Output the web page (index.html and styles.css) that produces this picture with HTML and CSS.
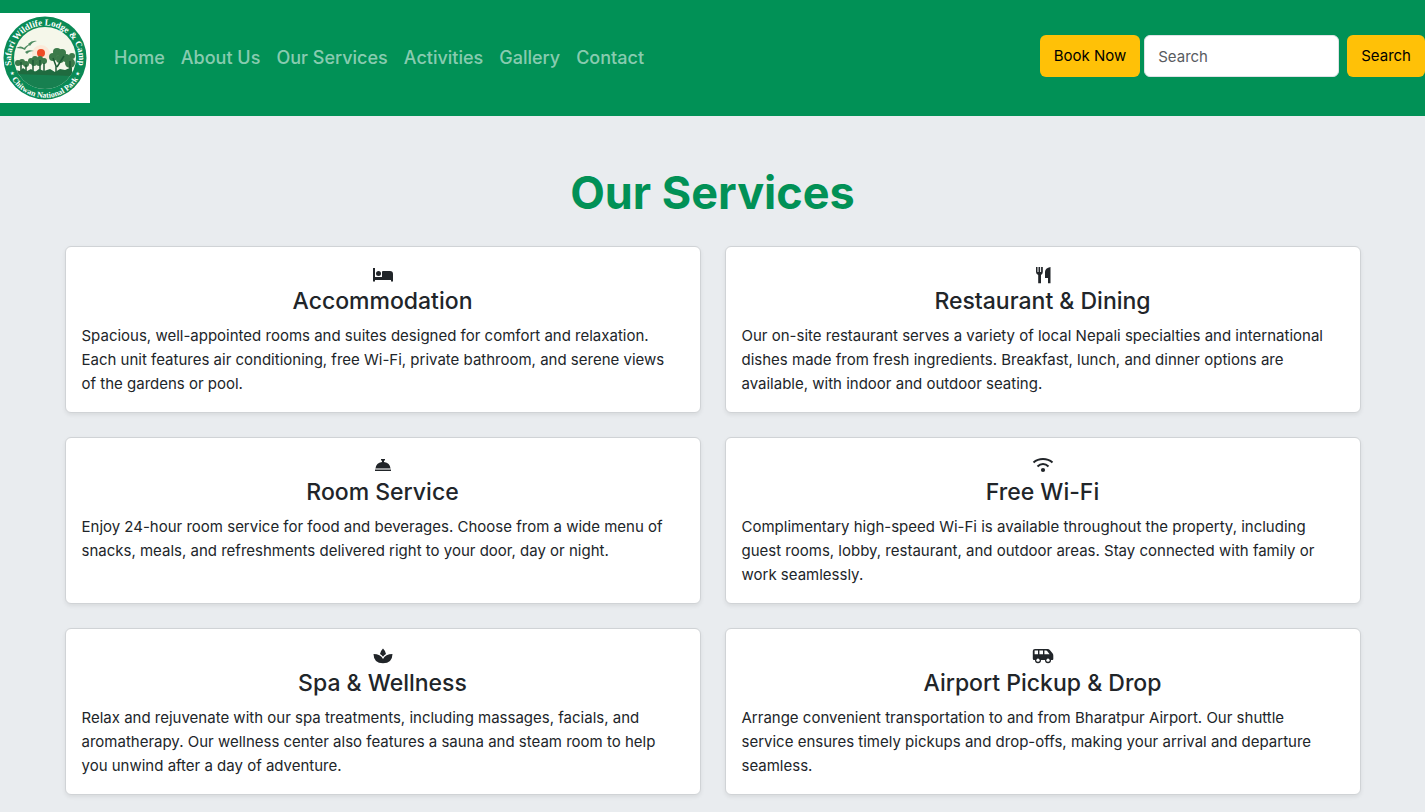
FILE: index.html
```html
<!DOCTYPE html>
<html lang="en">

<head>
  <meta charset="UTF-8">
  <meta name="viewport" content="width=device-width, initial-scale=1">
  <title>Our Services</title>
  <link rel="stylesheet" href="styles.css">
</head>

<body>
  <header class="navbar">
    <a class="logo" href="#" aria-label="Home page">
      <svg viewBox="0 0 90 90" width="90" height="90">
        <defs>
          <path id="ring-top" d="M13 58 A34 34 0 1 1 77 58" />
          <path id="ring-bottom" d="M8 57 A38.500 38.500 0 0 0 82 57" />
          <clipPath id="scene"><circle cx="45" cy="45" r="31" /></clipPath>
        </defs>
        <rect width="90" height="90" fill="#fff" />
        <circle cx="45" cy="45" r="41.500" fill="#0a8a55" />
        <circle cx="45" cy="45" r="31" fill="#f5f7ea" />
        <g clip-path="url(#scene)">
          <circle cx="41" cy="41" r="9" fill="#fbe9d8" />
          <circle cx="41" cy="40" r="4" fill="#ee4a25" />
          <path d="M13 60 Q30 57 45 59 T77 58 V76 H13Z" fill="#178050" />
          <g fill="#3b7a4a">
            <circle cx="18" cy="50" r="3" /><circle cx="22" cy="49" r="3" /><circle cx="26" cy="51" r="3" />
            <circle cx="31" cy="48" r="3" /><circle cx="35" cy="46" r="3" /><circle cx="34" cy="50" r="3" />
            <circle cx="40" cy="46" r="3" /><circle cx="44" cy="48" r="3" /><circle cx="39" cy="50" r="3" />
            <circle cx="53" cy="44" r="4" /><circle cx="57" cy="39" r="4" /><circle cx="62" cy="40" r="4" />
            <circle cx="66" cy="45" r="4" /><circle cx="60" cy="46" r="4" /><circle cx="70" cy="50" r="5" />
            <circle cx="72" cy="43" r="3" />
          </g>
          <path d="M21 49v12M26 52v9M33 47v14M40 47v14M44 50v11M53 45l3 8v8M64 43l-7 11M70 48v13" fill="none" stroke="#1d5a35" stroke-width="1.500" />
          <path d="M15 61v-4l5 1 3-3 4 3 4-2 4 3 4-3 5 2 6-2 5 3 5-3 5 1 7-3v9z" fill="#1f6b3f" />
          <path d="M16 35q5-3 8 0 4-4 7-4-5 3-6 6-3-2-9-2M28 31q4-4 9-3-5 1-7 5M25 39q3-3 9-1-5 0-7 3" fill="#4c8a60" />
        </g>
        <text class="logo-text"><textPath href="#ring-top" startOffset="50%" text-anchor="middle">Safari Wildlife Lodge &amp; Camp</textPath></text>
        <text class="logo-text logo-text-small"><textPath href="#ring-bottom" startOffset="50%" text-anchor="middle">⋆ Chitwan National Park ⋆</textPath></text>
      </svg>
    </a>
    <nav class="nav-links">
      <a href="#">Home</a>
      <a href="#">About Us</a>
      <a href="#">Our Services</a>
      <a href="#">Activities</a>
      <a href="#">Gallery</a>
      <a href="#">Contact</a>
    </nav>
    <form class="search-form">
      <button class="btn" type="button">Book Now</button>
      <input class="search-input" type="search" placeholder="Search" aria-label="Search">
      <button class="btn" type="submit">Search</button>
    </form>
  </header>

  <main class="container">
    <h1>Our Services</h1>
    <div class="services">
      <section class="card">
        <svg class="icon" viewBox="0 0 24 24">
          <path d="M2 5h2v9h7V9q0-1 1-1h7a3 3 0 0 1 3 3v7.500h-2V17H4v1.500H2z" />
          <circle cx="7.500" cy="10.500" r="2.500" />
        </svg>
        <h2>Accommodation</h2>
        <p>Spacious, well-appointed rooms and suites designed for comfort and relaxation. Each unit features air conditioning, free Wi-Fi, private bathroom, and serene views of the gardens or pool.</p>
      </section>
      <section class="card">
        <svg class="icon" viewBox="0 0 24 24">
          <path d="M5 4h1.500v5h1V4h1.600v5h1V4h1.700v5q0 2-1.800 3v8.200H7.200V12Q5 11 5 9zM19.500 4v16.200H17V15h-3V9q0-4 5.500-5z" />
        </svg>
        <h2>Restaurant &amp; Dining</h2>
        <p>Our on-site restaurant serves a variety of local Nepali specialties and international dishes made from fresh ingredients. Breakfast, lunch, and dinner options are available, with indoor and outdoor seating.</p>
      </section>
      <section class="card">
        <svg class="icon" viewBox="0 0 24 24">
          <path d="M10 5h4v1.500h-1V8q6 .7 6.500 6.500h-15Q5 8.700 11 8V6.500h-1zM4 15.500h16V17H4z" />
          <path class="band" d="M4.500 14.500h15v1h-15z" />
        </svg>
        <h2>Room Service</h2>
        <p>Enjoy 24-hour room service for food and beverages. Choose from a wide menu of snacks, meals, and refreshments delivered right to your door, day or night.</p>
      </section>
      <section class="card">
        <svg class="icon" viewBox="0 0 24 24">
          <path class="line" d="M2.500 8.500Q6.500 5 12 5t9.500 3.500M6.500 12.500Q9 10 12 10t5.500 2.500" />
          <circle cx="12" cy="16" r="2.100" />
        </svg>
        <h2>Free Wi-Fi</h2>
        <p>Complimentary high-speed Wi-Fi is available throughout the property, including guest rooms, lobby, restaurant, and outdoor areas. Stay connected with family or work seamlessly.</p>
      </section>
      <section class="card">
        <svg class="icon" viewBox="0 0 24 24">
          <path d="M12 3.500q3 3 3 5.500-2 1-3 2.700Q11 10 9 9q0-2.500 3-5.500zM2.500 9q7 0 9.500 5 2.500-5 9.500-5-.2 9.300-9.500 9.300T2.500 9z" />
        </svg>
        <h2>Spa &amp; Wellness</h2>
        <p>Relax and rejuvenate with our spa treatments, including massages, facials, and aromatherapy. Our wellness center also features a sauna and steam room to help you unwind after a day of adventure.</p>
      </section>
      <section class="card">
        <svg class="icon" viewBox="0 0 24 24">
          <path fill-rule="evenodd" d="M4 4h12.500q1.500 0 2.500 1.200l2.500 3q.8 1 .8 2.300V14q0 1-1 1H3q-1.200 0-1.200-1.200V6q0-2 2.200-2zM3.600 5.600V9.200H7V5.600zM8.400 5.600V9.200h3.600V5.600zM13.400 5.600V9.200h5.200l-2.300-3q-.5-.6-1.200-.6z" />
          <circle cx="7" cy="15.200" r="3" /><circle cx="17" cy="15.200" r="3" />
          <circle class="hub" cx="7" cy="15.200" r="1.600" /><circle class="hub" cx="17" cy="15.200" r="1.600" />
        </svg>
        <h2>Airport Pickup &amp; Drop</h2>
        <p>Arrange convenient transportation to and from Bharatpur Airport. Our shuttle service ensures timely pickups and drop-offs, making your arrival and departure seamless.</p>
      </section>
    </div>
  </main>
</body>

</html>
```
FILE: styles.css
```css
* {
  box-sizing: border-box;
}

body {
  margin: 0;
  font-family: Inter, sans-serif;
  font-size: 15px;
  line-height: 24px;
  color: #212529;
  background-color: #e9ecef;
}

.navbar {
  display: flex;
  align-items: center;
  padding: 13px 0;
  background-color: #019156;
}

.logo {
  display: flex;
  margin-right: 16px;
}

.logo-text {
  fill: white;
  font-family: "Liberation Serif", serif;
  font-size: 9px;
  font-weight: bold;
}

.logo-text-small {
  font-size: 8px;
}

.nav-links {
  display: flex;
}

.nav-links a {
  padding: 8px;
  font-size: 18px;
  font-weight: 500;
  color: rgba(255, 255, 255, .55);
  text-decoration: none;
}

.search-form {
  display: flex;
  align-items: center;
  margin-left: auto;
  margin-bottom: 4px;
}

.btn,
.search-input {
  height: 42px;
  font: inherit;
  border-radius: 6px;
}

.btn {
  padding: 0 14px;
  border: 0;
  color: black;
  background-color: #ffc107;
  cursor: pointer;
}

.search-input {
  width: 195px;
  margin: 0 8px 0 4px;
  padding: 0 13px;
  border: 1px solid #dee2e6;
  color: #212529;
  background-color: white;
}

.search-input::placeholder {
  color: #595c5f;
  opacity: 1;
}

.container {
  max-width: 1320px;
  margin: 0 auto;
  padding: 48px 12px;
}

h1 {
  margin: 0 0 24px;
  font-size: 45px;
  line-height: 58px;
  font-weight: bold;
  text-align: center;
  color: #019156;
}

.services {
  display: grid;
  grid-template-columns: 1fr 1fr;
  gap: 24px;
}

.card {
  padding: 16px;
  border: 1px solid #d0d3d6;
  border-radius: 6px;
  background-color: white;
  box-shadow: 0 2px 4px rgba(0, 0, 0, .075);
}

.icon {
  display: block;
  width: 24px;
  height: 24px;
  margin: 0 auto;
  fill: #212529;
}

.icon .line {
  fill: none;
  stroke: #212529;
  stroke-width: 2;
}

.icon .hub {
  fill: white;
}

.icon .band {
  fill: #a0a3a5;
}

.card h2 {
  margin: 0 0 8px;
  font-size: 23px;
  line-height: 29px;
  font-weight: 500;
  text-align: center;
}

.card p {
  margin: 0;
  padding-right: 16px;
}

@media (max-width: 900px) {
  .navbar {
    flex-wrap: wrap;
  }

  .services {
    grid-template-columns: 1fr;
  }
}
```
